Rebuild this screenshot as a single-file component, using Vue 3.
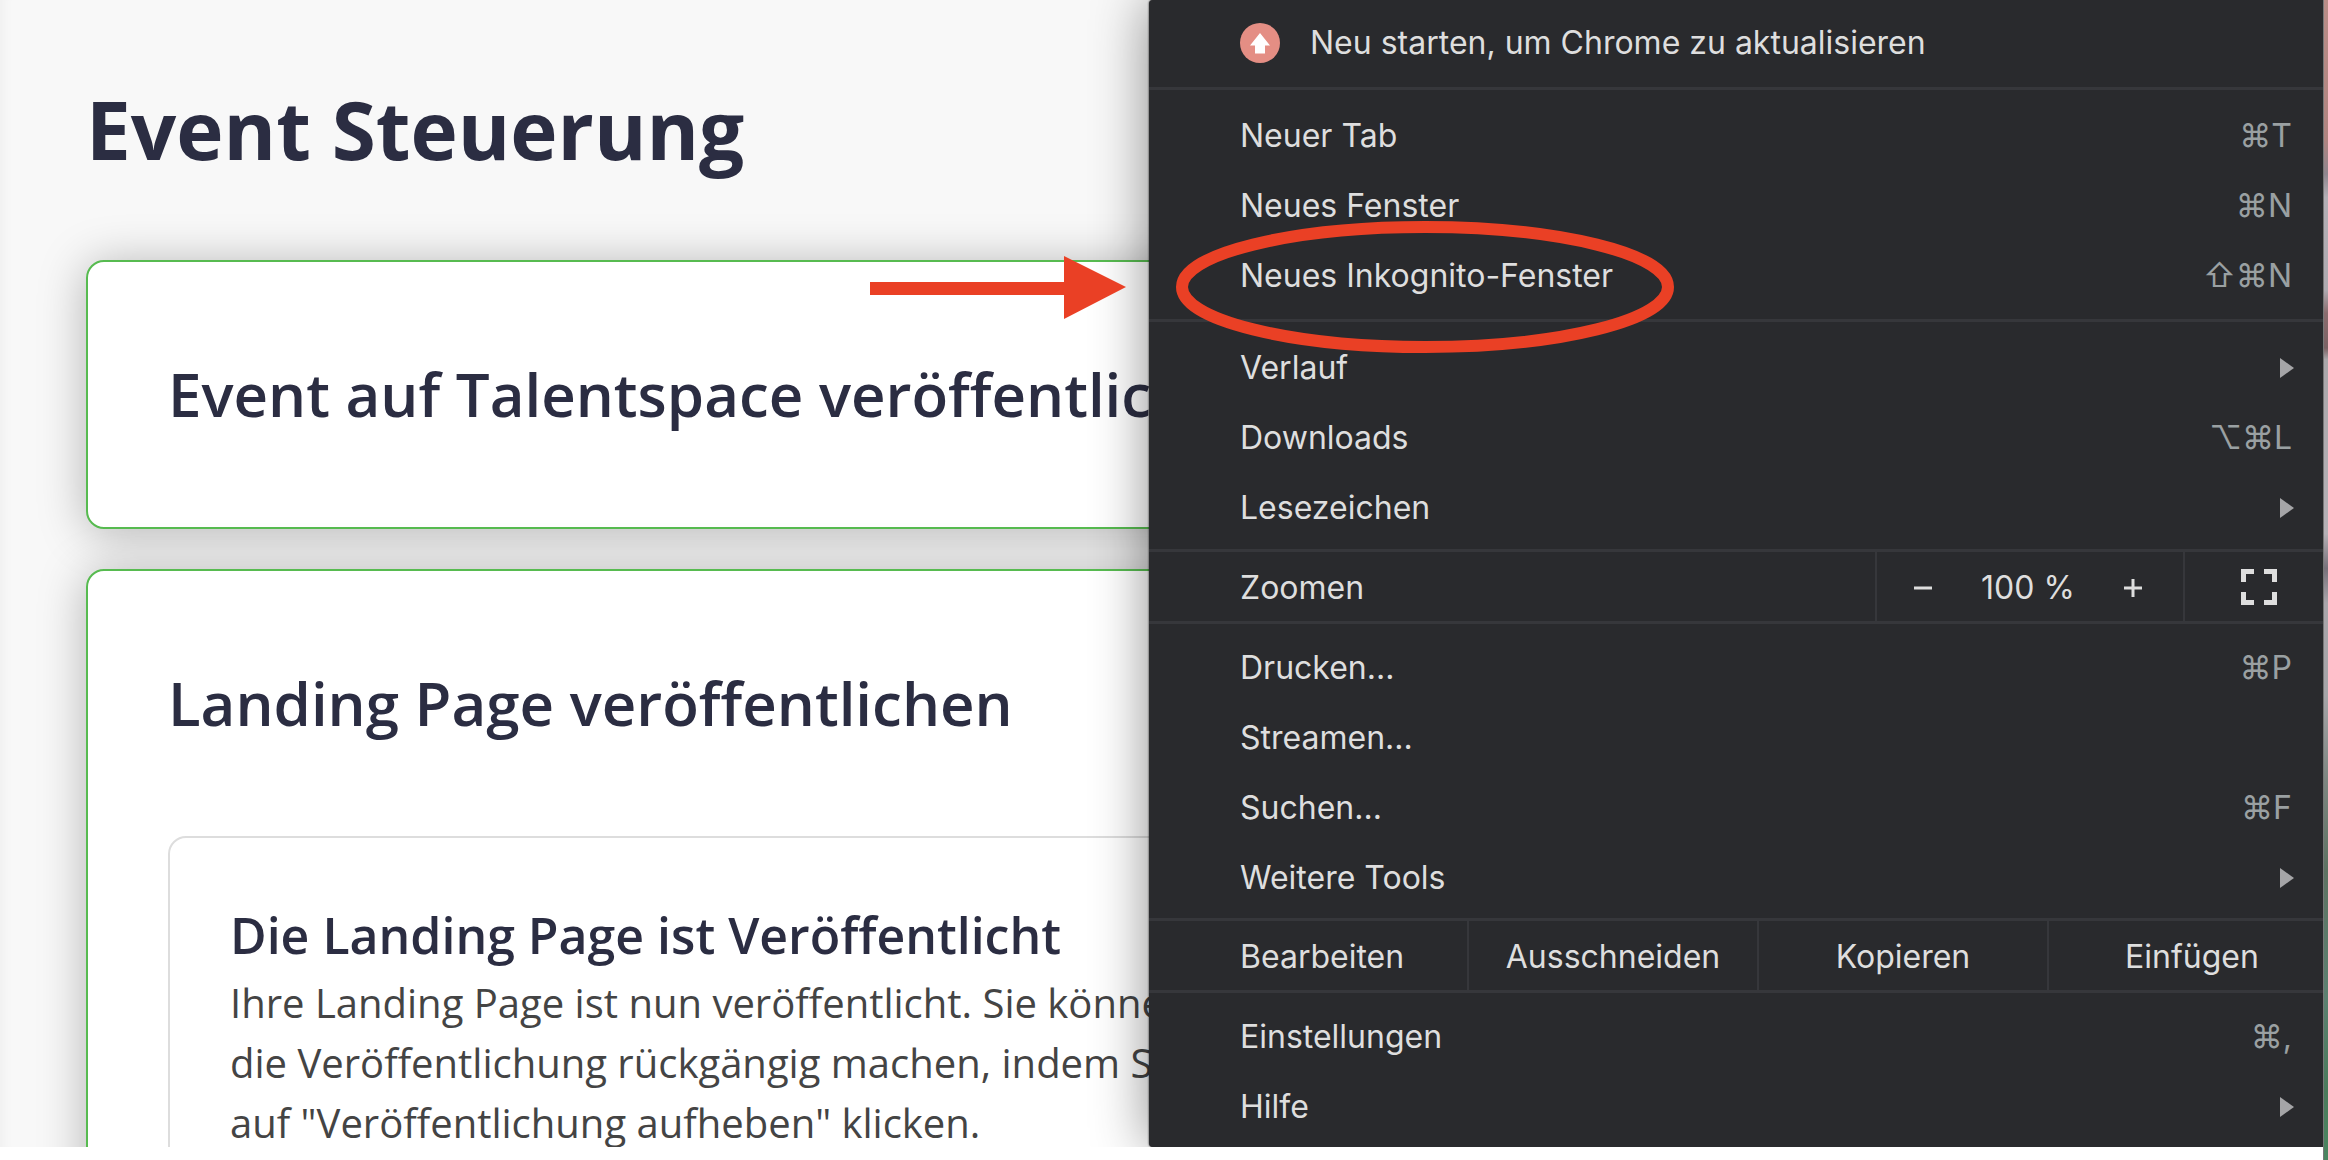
<script setup>
const groups = [
  {
    name: 'windows',
    items: [
      { label: 'Neuer Tab', keys: '⌘T' },
      { label: 'Neues Fenster', keys: '⌘N' },
      { label: 'Neues Inkognito-Fenster', keys: '⇧⌘N' },
    ],
  },
  {
    name: 'library',
    items: [
      { label: 'Verlauf', submenu: true },
      { label: 'Downloads', keys: '⌥⌘L' },
      { label: 'Lesezeichen', submenu: true },
    ],
  },
  { name: 'zoom' },
  {
    name: 'tools',
    items: [
      { label: 'Drucken...', keys: '⌘P' },
      { label: 'Streamen...' },
      { label: 'Suchen...', keys: '⌘F' },
      { label: 'Weitere Tools', submenu: true },
    ],
  },
  { name: 'edit' },
  {
    name: 'settings',
    items: [
      { label: 'Einstellungen', keys: '⌘,' },
      { label: 'Hilfe', submenu: true },
    ],
  },
]
const editActions = ['Ausschneiden', 'Kopieren', 'Einfügen']
</script>

<template>
  <div class="desktop">
    <div class="screen">
      <main class="page">
        <h1>Event Steuerung</h1>
        <section class="card">
          <h2>Event auf Talentspace veröffentlichen</h2>
        </section>
        <section class="card">
          <h2>Landing Page veröffentlichen</h2>
          <article class="notice">
            <h3>Die Landing Page ist Veröffentlicht</h3>
            <p>
              Ihre Landing Page ist nun veröffentlicht. Sie können<br />
              die Veröffentlichung rückgängig machen, indem Sie<br />
              auf "Veröffentlichung aufheben" klicken.
            </p>
          </article>
        </section>
      </main>

      <nav class="menu" aria-label="Chrome">
        <div class="group update">
          <button type="button" class="item">
            <svg class="badge" viewBox="0 0 40 40" aria-hidden="true">
              <circle cx="20" cy="20" r="20" fill="#e48e84" />
              <path d="M20 10 30 22.500H25V30.500H15V22.500H10Z" fill="#fff" />
            </svg>
            <span>Neu starten, um Chrome zu aktualisieren</span>
          </button>
        </div>

        <template v-for="group in groups" :key="group.name">
          <div v-if="group.name === 'zoom'" class="strip">
            <span class="strip-label">Zoomen</span>
            <div class="zoom-controls">
              <button type="button" class="step" aria-label="Verkleinern">
                <svg viewBox="0 0 18 20" aria-hidden="true"><path d="M0 10H18" /></svg>
              </button>
              <output class="level">100 %</output>
              <button type="button" class="step" aria-label="Vergrößern">
                <svg viewBox="0 0 18 20" aria-hidden="true"><path d="M0 10H18M9 1V19" /></svg>
              </button>
            </div>
            <button type="button" class="fullscreen" aria-label="Vollbild">
              <svg viewBox="0 0 36 36" aria-hidden="true">
                <path d="M2.500 13V2.500H13M23 2.500H33.500V13M33.500 23V33.500H23M13 33.500H2.500V23" />
              </svg>
            </button>
          </div>

          <div v-else-if="group.name === 'edit'" class="strip">
            <span class="strip-label">Bearbeiten</span>
            <button v-for="action in editActions" :key="action" type="button" class="action">
              {{ action }}
            </button>
          </div>

          <div v-else class="group" :class="group.name">
            <button v-for="item in group.items" :key="item.label" type="button" class="item">
              <span>{{ item.label }}</span>
              <kbd v-if="item.keys">{{ item.keys }}</kbd>
              <svg v-if="item.submenu" class="arrow" viewBox="0 0 14 20" aria-hidden="true">
                <path d="M0 0 14 10 0 20Z" />
              </svg>
            </button>
          </div>
        </template>

        <svg class="annotation" viewBox="0 0 804 132" aria-hidden="true">
          <path d="M0 61H194V35L256 66 194 98V74H0Z" fill="#ea4025" />
          <ellipse cx="555" cy="66" rx="243" ry="60" fill="none" stroke="#ea4025" stroke-width="12" />
        </svg>
      </nav>
    </div>
    <div class="wallpaper"></div>
  </div>
</template>

<style>
body {
  margin: 0;
  background: #fff;
}
</style>

<style scoped>
.desktop {
  display: grid;
  grid-template-columns: minmax(0, 1fr) 5px;
  min-height: 100vh;
  overflow: hidden;
}

.screen {
  display: grid;
  grid-template-columns: minmax(0, 1fr) 1174px;
  align-self: start;
  overflow: hidden;
}

/* The page runs on underneath the open menu, which sets the height. */
.page {
  grid-area: 1 / 1 / 2 / 3;
  contain: size;
  overflow: hidden;
  box-sizing: border-box;
  padding: 73px 86px 0;
  background: #f8f8f8;
  box-shadow: inset 12px 0 10px -8px #f0f0f0;
  font-family: "Open Sans", sans-serif;
  color: #2b2d42;
}

h1,
h2,
h3,
p {
  margin: 0;
  white-space: nowrap;
}

h1 {
  margin-bottom: 75px;
  font-size: 80px;
  font-weight: 700;
  line-height: 112px;
}

h2 {
  font-size: 60px;
  font-weight: 600;
  line-height: 105px;
}

h3 {
  font-size: 50px;
  font-weight: 600;
  line-height: 75px;
}

p {
  color: #444;
  font-size: 40px;
  line-height: 60px;
}

.card {
  margin-bottom: 40px;
  padding: 80px;
  border: 2px solid #57bb50;
  border-radius: 18px;
  background: #fff;
  box-shadow: 0 4px 48px rgba(0, 0, 0, 0.28);
}

.notice {
  margin-top: 80px;
  padding: 60px;
  border: 2px solid #ddd;
  border-radius: 18px;
}

.menu {
  position: relative;
  grid-area: 1 / 2 / 2 / 3;
  border-radius: 4px 0 0 4px;
  background: #292a2d;
  box-shadow: 0 0 2px #111, 0 0 56px rgba(0, 0, 0, 0.45);
  color: #dedede;
  font-family: Inter, "DejaVu Sans", sans-serif;
  font-size: 32px;
  line-height: 40px;
}

button {
  margin: 0;
  padding: 0;
  border: 0;
  background: none;
  color: inherit;
  font: inherit;
}

.group {
  padding: 9px 0 5px;
}

.group + .group,
.group + .strip,
.strip + .group {
  border-top: 3px solid #36373b;
}

.update {
  padding: 8px 0 9px;
}

.windows {
  padding: 11px 0 8px;
}

.library {
  padding: 11px 0 6px;
}

.item {
  display: flex;
  align-items: center;
  width: 100%;
  height: 70px;
  padding: 0 29px 0 91px;
  text-align: left;
}

.badge {
  width: 40px;
  height: 40px;
  margin-right: 30px;
}

kbd {
  margin-left: auto;
  padding-right: 2px;
  color: #9aa0a2;
  font: inherit;
}

.arrow {
  width: 14px;
  height: 20px;
  margin-left: auto;
  fill: #a5a5a7;
}

.strip {
  display: flex;
  height: 69px;
  line-height: 71px;
}

.strip-label {
  flex: 1;
  padding-left: 91px;
}

.zoom-controls,
.fullscreen,
.action {
  border-left: 2px solid #36373b;
}

.zoom-controls {
  display: flex;
  justify-content: space-between;
  box-sizing: border-box;
  width: 308px;
  padding: 0 41px 0 37px;
}

.step svg,
.fullscreen svg {
  display: block;
  fill: none;
  stroke: #dedede;
}

.step svg {
  width: 18px;
  height: 20px;
  margin-top: 3px;
  stroke-width: 3px;
}

.fullscreen {
  display: flex;
  align-items: center;
  justify-content: center;
  box-sizing: border-box;
  width: 140px;
  padding-left: 10px;
}

.fullscreen svg {
  width: 36px;
  height: 36px;
  stroke-width: 5px;
}

.action {
  box-sizing: border-box;
  width: 290px;
}

.action:last-child {
  width: 276px;
  padding-left: 12px;
}

.annotation {
  position: absolute;
  top: 221px;
  left: -279px;
  width: 804px;
  height: 132px;
  pointer-events: none;
}

.wallpaper {
  border-left: 1px solid #777;
  box-sizing: border-box;
  background: linear-gradient(
    #b98d88 0,
    #b08480 12%,
    #8f868e 15%,
    #b3afb5 17%,
    #aeaab0 25%,
    #8a6c6e 27%,
    #7b6264 30%,
    #aaa7aa 31%,
    #b5b1b6 46%,
    #77717a 49%,
    #a9a6ab 52%,
    #a5a5a8 60%,
    #7e8782 67%,
    #5d7262 75%,
    #5b8070 86%,
    #4a7a5b 94%,
    #4a8560 100%
  );
}
</style>
